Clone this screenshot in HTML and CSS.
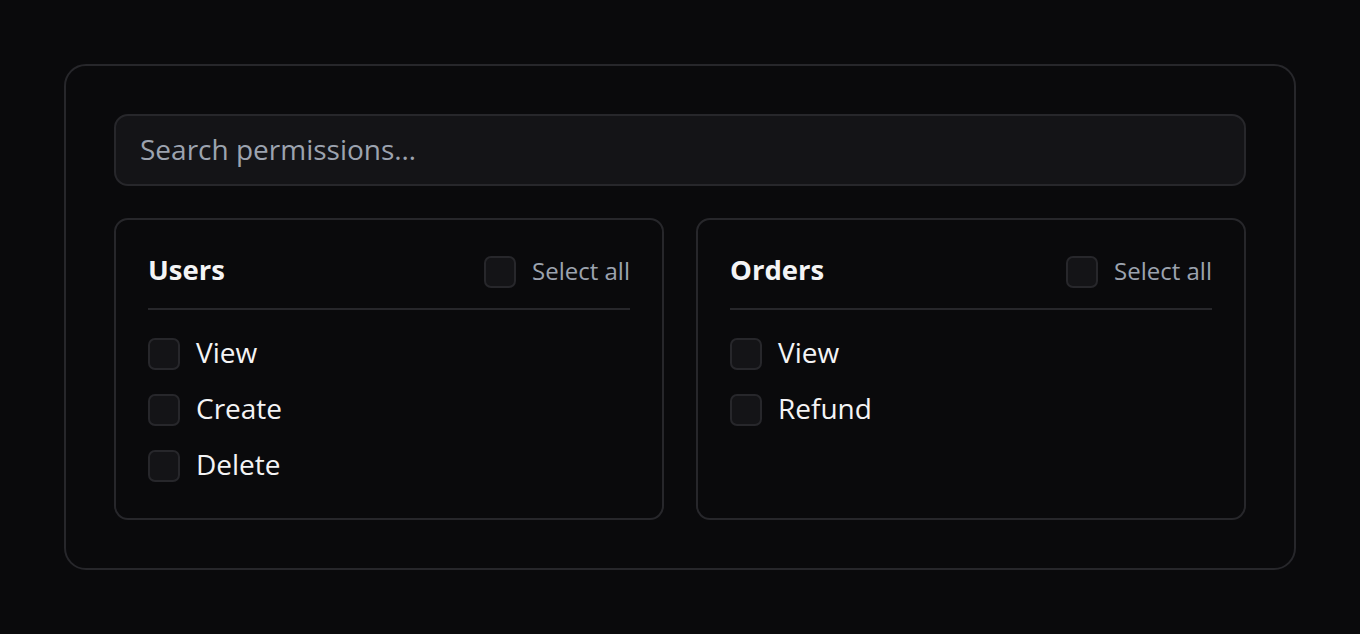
FILE: index.html
```html
<!DOCTYPE html>
<html lang="en">
<head>
<meta charset="utf-8">
<title>Permissions</title>
<link rel="stylesheet" href="styles.css">
</head>
<body>
<div class="card">
  <input class="search" type="text" placeholder="Search permissions…">
  <div class="groups">
    <section class="group">
      <header class="group-head">
        <h2 class="group-title">Users</h2>
        <label class="select-all"><span class="box"></span><span class="label">Select all</span></label>
      </header>
      <ul class="items">
        <li class="item"><span class="box"></span><span class="label">View</span></li>
        <li class="item"><span class="box"></span><span class="label">Create</span></li>
        <li class="item"><span class="box"></span><span class="label">Delete</span></li>
      </ul>
    </section>
    <section class="group">
      <header class="group-head">
        <h2 class="group-title">Orders</h2>
        <label class="select-all"><span class="box"></span><span class="label">Select all</span></label>
      </header>
      <ul class="items">
        <li class="item"><span class="box"></span><span class="label">View</span></li>
        <li class="item"><span class="box"></span><span class="label">Refund</span></li>
      </ul>
    </section>
  </div>
</div>
</body>
</html>
```

FILE: styles.css
```css
* { box-sizing: border-box; }
html, body { margin: 0; }
body {
  background: #0a0a0c;
  padding: 64px;
  font-family: "Open Sans", "Noto Sans", sans-serif;
  color: #f4f4f5;
  min-height: 634px;
}
.card {
  border: 2px solid #27272b;
  border-radius: 22px;
  padding: 48px;
  display: flex;
  flex-direction: column;
  gap: 32px;
}
.search {
  display: block;
  width: 100%;
  height: 72px;
  padding: 0 24px 2px;
  background: #141417;
  border: 2px solid #27272b;
  border-radius: 14px;
  font-family: inherit;
  font-size: 28px;
  color: #f4f4f5;
  outline: none;
}
.search::placeholder { color: #9ca3af; opacity: 1; }
.groups {
  display: grid;
  grid-template-columns: 1fr 1fr;
  gap: 32px;
}
.group {
  border: 2px solid #27272b;
  border-radius: 14px;
  padding: 32px;
  height: 302px;
}
.group-head {
  display: flex;
  align-items: center;
  justify-content: space-between;
  height: 58px;
  padding-bottom: 16px;
  border-bottom: 2px solid #27272b;
}
.group-title {
  margin: 0 0 4px;
  font-size: 27.5px;
  font-weight: 700;
  line-height: 36px;
}
.select-all {
  display: flex;
  align-items: center;
  gap: 16px;
  font-size: 24px;
  color: #9ca3af;
  line-height: 32px;
}
.select-all .label { margin-bottom: 2px; }
.box {
  display: block;
  width: 32px;
  height: 32px;
  flex: none;
  border: 2px solid #27272b;
  border-radius: 7px;
  background: #141417;
}
.items {
  list-style: none;
  margin: 0;
  padding: 28px 0 0;
  display: flex;
  flex-direction: column;
  gap: 24px;
}
.item {
  display: flex;
  align-items: center;
  gap: 16px;
  font-size: 28px;
  line-height: 32px;
  height: 32px;
}
.item .label { margin-bottom: 4px; }
```
